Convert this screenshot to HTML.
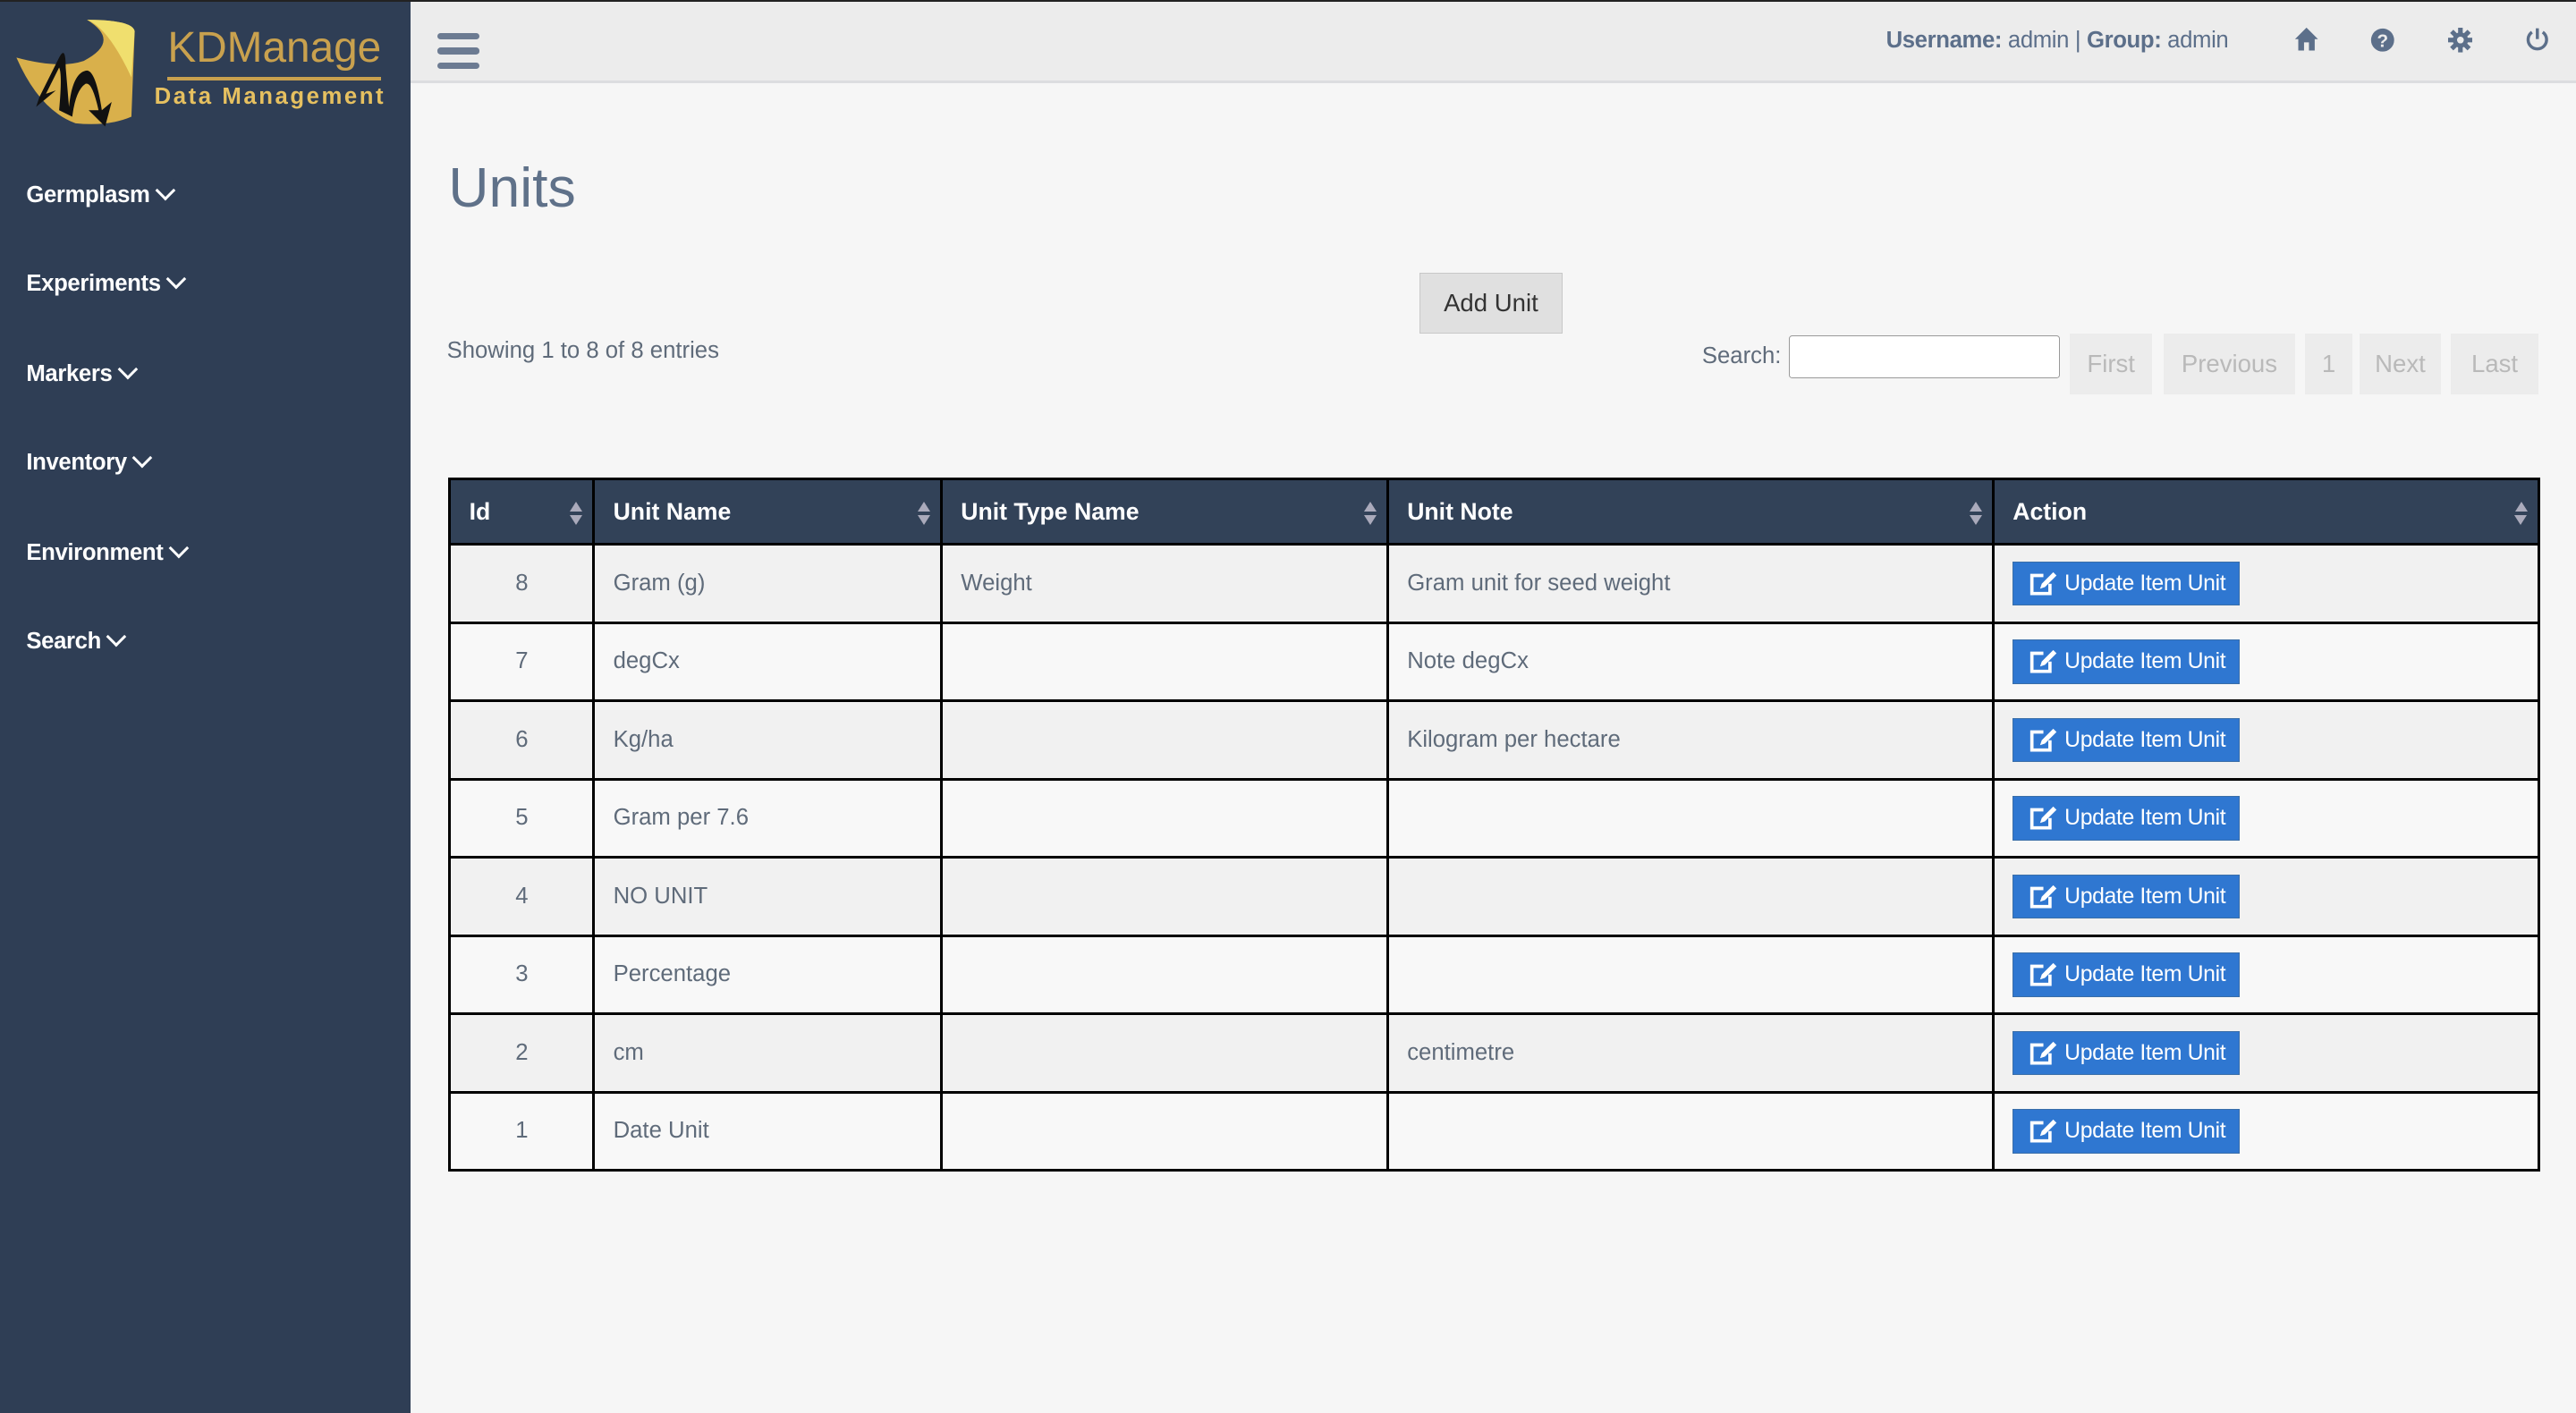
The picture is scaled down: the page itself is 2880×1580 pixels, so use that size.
<!DOCTYPE html>
<html><head><meta charset="utf-8"><style>
html,body{margin:0;padding:0;width:2880px;height:1580px;overflow:hidden;background:#f5f5f5}
#w{zoom:1.83673;width:1568px;height:860px;position:relative;font-family:"Liberation Sans",sans-serif;background:#f6f6f6}
#top{position:absolute;left:0;top:0;width:1568px;height:1px;background:#222}
#side{position:absolute;left:0;top:1px;width:250px;height:859px;background:#2f3e55}
#hdr{position:absolute;left:250px;top:1px;right:0;height:48px;background:#ececec;border-bottom:2px solid #dcdde0}
.nav{position:absolute;left:16px;color:#fff;font-size:14px;font-weight:bold;letter-spacing:-0.2px}
.nav span{display:inline-block;width:7px;height:7px;border-right:2px solid #fff;border-bottom:2px solid #fff;transform:rotate(45deg);margin-left:5px;position:relative;top:-3px}
.ham{position:absolute;left:266px;top:20px;width:26px}
.ham div{height:4px;background:#6c7b92;border-radius:2px;margin-bottom:5px}
.user{position:absolute;left:1148px;top:17px;font-size:14px;color:#5c6f8a;letter-spacing:-0.2px}
h1{position:absolute;left:273px;top:95px;margin:0;font-weight:normal;font-size:34px;color:#5f7189}
.btn{position:absolute;left:864px;top:166px;width:86px;height:36px;background:#e0e0e0;border:1px solid #c8c8c8;font-size:15px;color:#333;text-align:center;line-height:36px}
.show{position:absolute;left:272px;top:206px;font-size:14px;color:#5f6b7a}
.srch{position:absolute;left:1036px;top:209px;font-size:14px;color:#5f6b7a}
.inp{position:absolute;left:1089px;top:204px;width:164px;height:25px;border:1px solid #999;background:#fff;border-radius:2px}
.pg{position:absolute;top:203px;height:37px;line-height:37px;background:#ececec;color:#b9b9b9;font-size:15px;text-align:center}
table{position:absolute;left:273px;top:291px;border-collapse:collapse;width:1273px;font-size:14px;color:#5f6b7a}
td,th{border:2px solid #000;padding:0 11px;text-align:left}
th{background:#324258;color:#fff;height:38px;font-size:14.5px;position:relative}
th i{position:absolute;right:6px;top:13px;width:0;height:0;border-left:4px solid transparent;border-right:4px solid transparent;border-bottom:6px solid #aab}
th i:after{content:"";position:absolute;left:-4px;top:8px;border-left:4px solid transparent;border-right:4px solid transparent;border-top:6px solid #aab}
td{height:46px;background:#f8f8f8}
tr:nth-child(even) td{background:#f1f1f1}
td.c{text-align:center}
.ub{display:inline-block;background:#2f77d1;border:1px solid #3a6ea8;color:#fff;font-size:13.5px;padding:0 8px 0 9px;height:26px;line-height:26px;letter-spacing:-0.2px}
.ub svg{vertical-align:-4px;margin-right:4px}
</style></head><body><div id="w">
<div id="top"></div>
<div id="side">
<svg style="position:absolute;left:6px;top:6px" width="80" height="72" viewBox="0 0 80 72"><path d="M47 5 Q75 5 76 12 L74 64 Q60 70 40 68 Q18 60 4 28 Q30 35 45 30 Q68 18 47 5Z" fill="#d9b04b"/><path d="M47 5 Q75 5 76 12 L74 40 Q60 10 47 5Z" fill="#f0df6e"/><path d="M18 52 L30 28 Q34 20 34 34 L36 58 Q38 38 46 36 Q52 34 56 60 L62 55 L58 70 L48 60 L54 60 Q50 42 46 44 Q40 48 38 64 L30 60 Q32 38 30 34 L22 50 L28 48 L16 58Z" fill="#111"/></svg>
<div style="position:absolute;left:102px;top:13px;font-size:26px;color:#c9a14e">KDManage</div>
<div style="position:absolute;left:102px;top:46px;width:130px;height:2px;background:#c9a14e"></div>
<div style="position:absolute;left:94px;top:50px;font-size:14px;font-weight:bold;letter-spacing:1.4px;color:#e6c060">Data Management</div>
<div class="nav" style="top:110px">Germplasm<span></span></div>
<div class="nav" style="top:164px">Experiments<span></span></div>
<div class="nav" style="top:219px">Markers<span></span></div>
<div class="nav" style="top:273px">Inventory<span></span></div>
<div class="nav" style="top:328px">Environment<span></span></div>
<div class="nav" style="top:382px">Search<span></span></div>
</div>
<div id="hdr"></div>
<div class="ham"><div></div><div></div><div></div></div>
<div class="user"><b>Username:</b> admin | <b>Group:</b> admin</div>
<svg style="position:absolute;left:1396px;top:16px" width="16" height="16" viewBox="0 0 16 16"><path d="M8 1 L15 8 L13 8 L13 15 L9.5 15 L9.5 10 L6.5 10 L6.5 15 L3 15 L3 8 L1 8Z" fill="#5c6f8a"/></svg>
<svg style="position:absolute;left:1443px;top:17px" width="15" height="15" viewBox="0 0 16 16"><circle cx="8" cy="8" r="7.5" fill="#5c6f8a"/><text x="8" y="12.5" font-size="12" font-weight="bold" fill="#ececec" text-anchor="middle" font-family="Liberation Sans">?</text></svg>
<svg style="position:absolute;left:1490px;top:17px" width="15" height="15" viewBox="0 0 16 16"><g fill="#5c6f8a"><circle cx="8" cy="8" r="5"/><rect x="6.5" y="0" width="3" height="16"/><rect x="0" y="6.5" width="16" height="3"/><rect x="6.5" y="0" width="3" height="16" transform="rotate(45 8 8)"/><rect x="6.5" y="0" width="3" height="16" transform="rotate(-45 8 8)"/></g><circle cx="8" cy="8" r="2.2" fill="#ececec"/></svg>
<svg style="position:absolute;left:1537px;top:16px" width="15" height="16" viewBox="0 0 16 16"><path d="M4.5 3.5 A6 6 0 1 0 11.5 3.5" fill="none" stroke="#5c6f8a" stroke-width="2"/><path d="M8 1 V8" stroke="#5c6f8a" stroke-width="2"/></svg>
<h1>Units</h1>
<div class="btn">Add Unit</div>
<div class="show">Showing 1 to 8 of 8 entries</div>
<div class="srch">Search:</div><div class="inp"></div>
<div class="pg" style="left:1260px;width:50px">First</div>
<div class="pg" style="left:1317px;width:80px">Previous</div>
<div class="pg" style="left:1403px;width:29px">1</div>
<div class="pg" style="left:1436px;width:50px">Next</div>
<div class="pg" style="left:1492px;width:53px">Last</div>
<table>
<tr><th style="width:64px">Id<i></i></th><th style="width:188px">Unit Name<i></i></th><th style="width:248px">Unit Type Name<i></i></th><th style="width:345px">Unit Note<i></i></th><th>Action<i></i></th></tr>
<tr><td class="c">8</td><td>Gram (g)</td><td>Weight</td><td>Gram unit for seed weight</td><td><span class="ub"><svg width="18" height="16" viewBox="0 0 18 16"><path d="M9 3 H2 V14 H13 V8" fill="none" stroke="#fff" stroke-width="2"/><path d="M7 11 L8 8 L15 1 L17 3 L10 10Z" fill="#fff"/></svg>Update Item Unit</span></td></tr>
<tr><td class="c">7</td><td>degCx</td><td></td><td>Note degCx</td><td><span class="ub"><svg width="18" height="16" viewBox="0 0 18 16"><path d="M9 3 H2 V14 H13 V8" fill="none" stroke="#fff" stroke-width="2"/><path d="M7 11 L8 8 L15 1 L17 3 L10 10Z" fill="#fff"/></svg>Update Item Unit</span></td></tr>
<tr><td class="c">6</td><td>Kg/ha</td><td></td><td>Kilogram per hectare</td><td><span class="ub"><svg width="18" height="16" viewBox="0 0 18 16"><path d="M9 3 H2 V14 H13 V8" fill="none" stroke="#fff" stroke-width="2"/><path d="M7 11 L8 8 L15 1 L17 3 L10 10Z" fill="#fff"/></svg>Update Item Unit</span></td></tr>
<tr><td class="c">5</td><td>Gram per 7.6</td><td></td><td></td><td><span class="ub"><svg width="18" height="16" viewBox="0 0 18 16"><path d="M9 3 H2 V14 H13 V8" fill="none" stroke="#fff" stroke-width="2"/><path d="M7 11 L8 8 L15 1 L17 3 L10 10Z" fill="#fff"/></svg>Update Item Unit</span></td></tr>
<tr><td class="c">4</td><td>NO UNIT</td><td></td><td></td><td><span class="ub"><svg width="18" height="16" viewBox="0 0 18 16"><path d="M9 3 H2 V14 H13 V8" fill="none" stroke="#fff" stroke-width="2"/><path d="M7 11 L8 8 L15 1 L17 3 L10 10Z" fill="#fff"/></svg>Update Item Unit</span></td></tr>
<tr><td class="c">3</td><td>Percentage</td><td></td><td></td><td><span class="ub"><svg width="18" height="16" viewBox="0 0 18 16"><path d="M9 3 H2 V14 H13 V8" fill="none" stroke="#fff" stroke-width="2"/><path d="M7 11 L8 8 L15 1 L17 3 L10 10Z" fill="#fff"/></svg>Update Item Unit</span></td></tr>
<tr><td class="c">2</td><td>cm</td><td></td><td>centimetre</td><td><span class="ub"><svg width="18" height="16" viewBox="0 0 18 16"><path d="M9 3 H2 V14 H13 V8" fill="none" stroke="#fff" stroke-width="2"/><path d="M7 11 L8 8 L15 1 L17 3 L10 10Z" fill="#fff"/></svg>Update Item Unit</span></td></tr>
<tr><td class="c">1</td><td>Date Unit</td><td></td><td></td><td><span class="ub"><svg width="18" height="16" viewBox="0 0 18 16"><path d="M9 3 H2 V14 H13 V8" fill="none" stroke="#fff" stroke-width="2"/><path d="M7 11 L8 8 L15 1 L17 3 L10 10Z" fill="#fff"/></svg>Update Item Unit</span></td></tr>
</table>
</div></body></html>
